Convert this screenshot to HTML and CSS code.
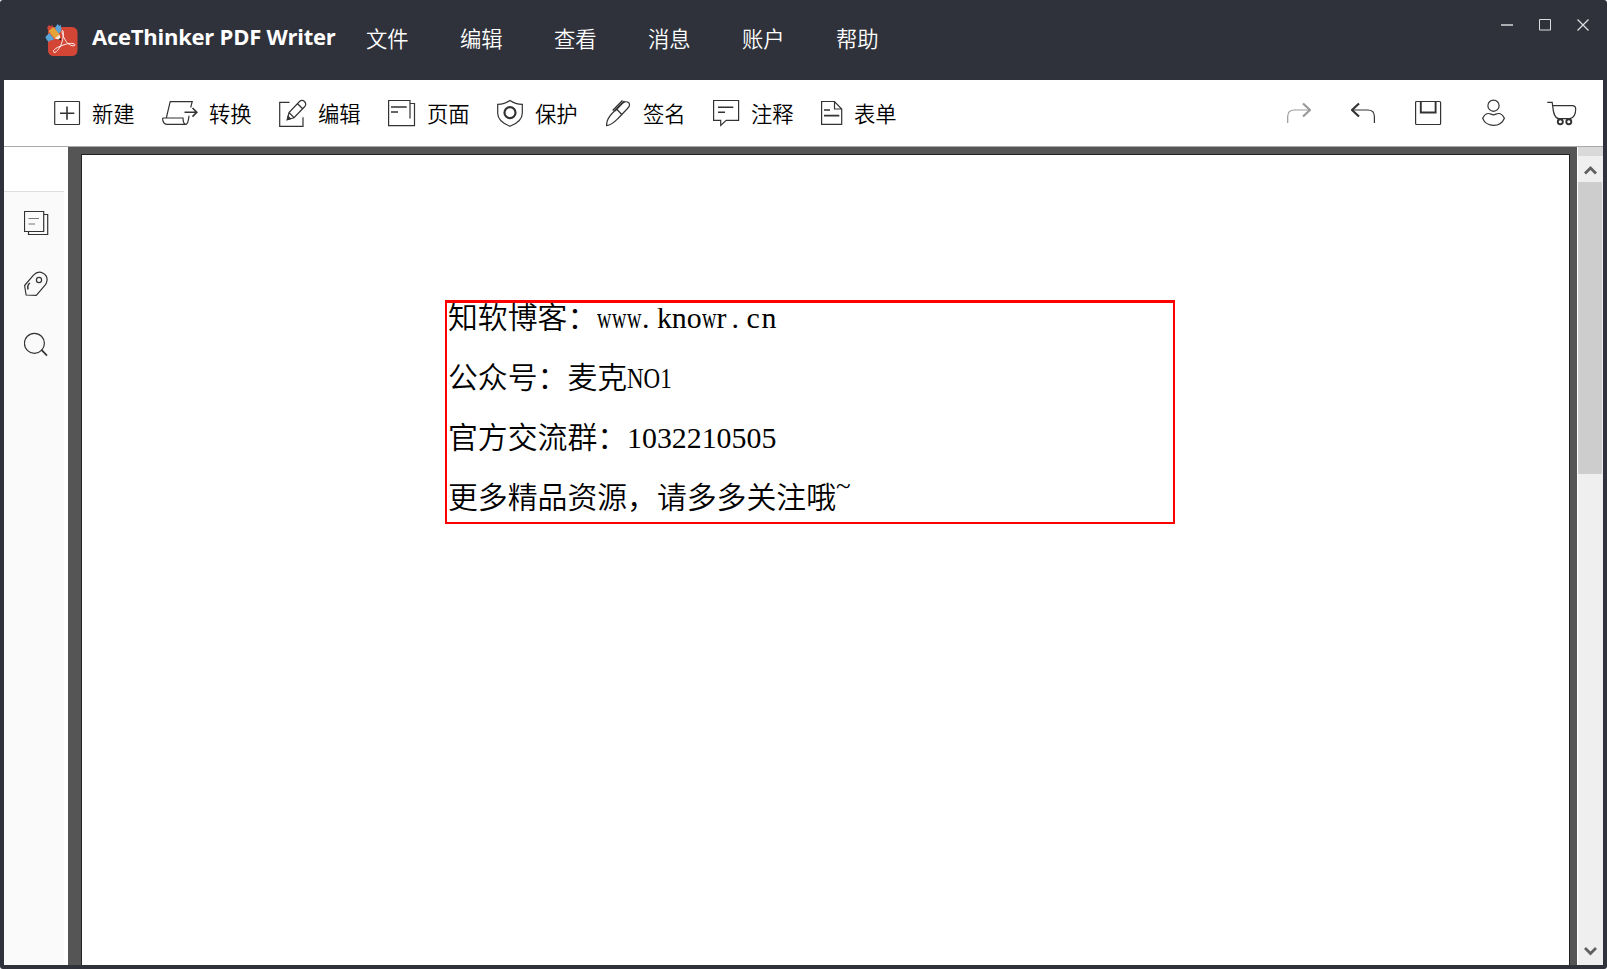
FILE: index.html
```html
<!DOCTYPE html>
<html lang="zh-CN">
<head>
<meta charset="utf-8">
<title>AceThinker PDF Writer</title>
<link rel="stylesheet" href="styles.css">
</head>
<body>
<div class="window">
  <header class="titlebar">
    <svg class="logo" width="34" height="34" viewBox="0 0 34 34">
      <rect x="3" y="4" width="29.5" height="29" rx="5.5" fill="#d34635"/>
      <path d="M.3 14l4-4 4 5 .5 2-4 .5-1 1.500-2-2z M10 5l2.500-4 2 2 1-1.500 1 4-1 3.500-2.500 2z" fill="#5aa5d8"/>
      <path d="M2 5l2-3 2 1.500 1-2 1.500 4-4 3z" fill="#d9473a"/>
      <path d="M3.500 8l5-4 6 7.500-5 4z" fill="#e5a338"/>
      <path d="M9.500 15.500l5-4 1.500 5.500z" fill="#f6e8d2"/>
      <path d="M13.300 16.500l2.200-1.700.8 2.700z" fill="#222"/>
      <path d="M17.500 7.500c-1.500 0 .5 7 4.500 12 3 3.500 7.500 4 8 2.500s-5-2.500-10-.5c-5 1.500-12 4.500-11.500 7s3.500 0 5.500-3c4-5 5.500-18 3.500-18z" fill="none" stroke="#fff" stroke-width=".9"/>
    </svg>
    <h1 class="title">AceThinker PDF Writer</h1>
    <nav class="menu">
      <span>文件</span><span>编辑</span><span>查看</span><span>消息</span><span>账户</span><span>帮助</span>
    </nav>
    <div class="controls">
      <svg width="12" height="12" viewBox="0 0 12 12"><path d="M0 6h12" stroke-width="2" stroke="#aaacb0"/></svg>
      <svg width="12" height="12" viewBox="0 0 12 12"><path d="M.5.5h11v10.500h-11z"/></svg>
      <svg width="12" height="12" viewBox="0 0 12 12"><path d="M.5.5l11 11M11.500.5l-11 11" stroke-width="1.300"/></svg>
    </div>
  </header>

  <div class="toolbar">
    <div class="tools">
      <div class="tool"><svg width="38" height="29"><rect x=".7" y="2.500" width="24.800" height="23" rx=".5"/><path d="M6 14.200h14.300M13 7.500v13.200" stroke-width="1.600"/></svg><span>新建</span></div>
      <div class="tool"><svg width="47" height="29"><path d="M28.700 8.500L30.200 2.700H8.200L4.300 19M.6 19H21c0 4 1 6.300 3 6.300H5C2 25.300.6 22.500.6 19M24 25.300c2.200-.3 2.500-4 3-8.500"/><path d="M22.500 13.300h12M30.500 9l4.300 4.300-4.300 4.300" stroke-width="1.600"/></svg><span>转换</span></div>
      <div class="tool"><svg width="39" height="29"><path d="M10.500 3.300H.7v24H24v-9"/><path d="M8.300 20.700l1.700-7.200L20.500 2.500q2.500-2.200 5 0 2.300 2.500.3 5L15 18.700zM10 13.500l5 5.200M18.500 4.700l5.200 5.100"/><path d="M8.300 20.700l.8-3.200 2.300 2.200z" fill="#333"/></svg><span>编辑</span></div>
      <div class="tool"><svg width="39" height="29"><path d="M22 19.500V1.500H.6v25.200h25.900V4.500H22"/><path d="M3 8h15.700M3 13h7" stroke-width="1.600"/></svg><span>页面</span></div>
      <div class="tool shield"><svg width="38" height="29"><path d="M13 1.500C9.500 4 5 5.300.7 5.300v9c0 6.500 5.800 10.500 12.300 13 6.500-2.500 12.300-6.500 12.300-13v-9C21 5.300 16.500 4 13 1.500z"/><circle cx="13" cy="13.700" r="5.500" stroke-width="2.200"/></svg><span>保护</span></div>
      <div class="tool"><svg width="37" height="29"><path d="M.6 26.600C.3 21.500 3 17.500 6.500 14L16 4.500c2.500-2.200 5.500-2 7-.5 1.300 2 .5 3.500-1.500 5.500L12.500 19C9 22.500 6 26 .6 26.600zM11 10.500l5.300 5.500"/><path d="M6.700 11.500L16.500 1.500M9 12L18.500 2" stroke-width="1.500"/></svg><span>签名</span></div>
      <div class="tool"><svg width="38" height="29"><path d="M.6 1.500h25v19.900H13.200l-5.500 5V21.400H.6z"/><path d="M5 8.300h15.300M5 13.300h7" stroke-width="1.600"/></svg><span>注释</span></div>
      <div class="tool"><svg width="33" height="29"><path d="M.6 2.500h12.900l7.200 7.500v15.400H.6zM13.500 2.500V10h7.200"/><path d="M3 11h6M3 16.700h15.300" stroke-width="1.700"/></svg><span>表单</span></div>
    </div>
    <div class="actions">
      <svg class="disabled" width="24" height="29"><path d="M.7 24v-6.500Q.7 11 7.500 11H23"/><path d="M16 4.500l7 6.500-7 6.500" stroke-width="2.200"/></svg>
      <svg width="24" height="29"><path d="M23.400 24v-6.500q0-6.500-6.800-6.500H1"/><path d="M8 4.500L1 11l7 6.500" stroke-width="2.200"/></svg>
      <svg width="27" height="29"><rect x=".6" y="2.500" width="25" height="23" rx="1"/><path d="M5.800 2.500v11h14.800v-11" stroke-width="1.900"/></svg>
      <svg width="25" height="29"><circle cx="11.500" cy="6.700" r="5.600"/><path d="M.7 19.200C2 16.500 4 14.500 6.500 14.500c2 0 3 1.300 5 1.300s3-1.300 5-1.300c2.500 0 4.500 2 5.900 4.700-2 4.800-6.500 7.200-10.900 7.200S2.300 24 .7 19.200z"/></svg>
      <svg width="30" height="29"><path d="M.3 3.300h4.900C6 8 5.800 19.500 12 19.700h11c4-1 5.700-4.700 5.700-9.700 0-2.500-1-3.300-3.500-3.300H5.700"/><circle cx="13.300" cy="22.700" r="2.500" stroke-width="1.900"/><circle cx="21.800" cy="22.700" r="2.500" stroke-width="1.900"/></svg>
    </div>
  </div>

  <main class="workspace">
    <aside class="sidebar">
      <div class="side-head"></div>
      <div class="side-icons">
        <svg width="26" height="26"><path d="M.5 1.500h19.200v20H.5zM19.700 4.500h4v20H4.500v-3"/><path d="M4.500 8.500H15M4.500 14h6.500" stroke="#777"/></svg>
        <svg width="26" height="26"><path d="M.6 14.500L9.500 4.200c6-6.500 15-1 13.300 6.300-.2 1.500-.8 2.500-1.500 3.300l-9 10.500-10.200-.3z"/><circle cx="15" cy="9" r="2.600"/><path d="M6 12q-3 2-2 6.500" stroke-width="1.500"/></svg>
        <svg width="26" height="26"><circle cx="10.400" cy="11.300" r="10"/><path d="M17.300 17.700l5.700 6" stroke-width="1.700"/></svg>
      </div>
    </aside>
    <div class="viewer">
      <article class="page">
        <div class="frame">
          <p>知软博客：<span class="latin url"><span class="w">w</span><span class="w">w</span><span class="w">w</span><span>.</span><span>k</span><span>n</span><span>o</span><span class="w">w</span><span>r</span><span>.</span><span>c</span><span>n</span></span></p>
          <p>公众号：麦克<span class="latin narrow">NO1</span></p>
          <p>官方交流群：<span class="latin">1032210505</span></p>
          <p>更多精品资源，请多多关注哦<span class="tilde">~</span></p>
        </div>
      </article>
    </div>
    <div class="scrollbar">
      <div class="scroll-cap"></div>
      <svg width="26" height="26"><path d="M8 17.500l5.500-5.500 5.500 5.500"/></svg>
      <div class="thumb"></div>
      <svg class="down" width="26" height="26"><path d="M8 9l5.500 5.500L19 9"/></svg>
    </div>
  </main>
</div>
</body>
</html>
```
FILE: styles.css
```css
* { box-sizing: border-box; }
body { margin: 0; background: #fff; font-family: "Noto Sans CJK SC", sans-serif; }
svg { display: block; flex: none; }

.window {
  display: flex;
  flex-direction: column;
  width: 1607px;
  height: 969px;
  padding: 0 4px 4px;
  background: #2f323b;
  border-radius: 3px;
  overflow: hidden;
}

/* Title bar */
.titlebar { display: flex; height: 80px; padding-left: 41px; color: #fff; }
.logo { margin-top: 23px; }
.title {
  width: 244px;
  margin: 21px 30px 0 13px;
  font: bold 22px/30px "Open Sans", sans-serif;
  letter-spacing: -.24px;
  white-space: nowrap;
}
.menu { display: flex; gap: 52px; margin-top: 22px; font-size: 21.33px; font-weight: 350; line-height: 32px; }
.menu span, .tool span { width: 42px; white-space: nowrap; }
.controls { display: flex; gap: 26px; margin: 19px 14px 0 auto; }
.controls svg { fill: none; stroke: #dcdde0; }

/* Toolbar */
.toolbar {
  display: flex;
  justify-content: space-between;
  height: 67px;
  padding: 19px 26px 0 50px;
  background: #fff;
  border-bottom: 1px solid #aaa;
}
.toolbar svg, .side-icons svg { fill: none; stroke: #333; stroke-width: 1.2; }
.tools { display: flex; gap: 28px; color: #000; }
.tool { display: flex; font-size: 21.33px; font-weight: 350; line-height: 27px; }
.shield { margin-right: 1px; }
.actions { display: flex; gap: 40px; }
.toolbar .disabled { stroke: #999; }

/* Workspace */
.workspace { display: flex; flex: 1; min-height: 0; background: #555; }
.sidebar { display: flex; flex-direction: column; width: 64px; padding-right: 4px; background: #fff; }
.side-head { height: 45px; border-bottom: 1px solid #ddd; }
.side-icons { display: flex; flex: 1; flex-direction: column; gap: 35px; padding: 18px 0 0 20px; background: #fafafa; }
.viewer { display: flex; flex: 1; padding: 7px 7px 0 13px; }
.page { flex: 1; padding: 145px 0 0 363px; background: #fff; border: solid #222; border-width: 1px 1px 0; }
.frame { width: 730px; height: 224px; padding-left: 1px; border: 2px solid #f00; border-top-width: 3px; }
.frame p { height: 60px; margin: 0; font-size: 29.85px; font-weight: 350; line-height: 60px; color: #000; white-space: nowrap; }
.frame p:first-child { margin-top: -18px; }
.latin { font-family: "Liberation Serif", serif; }
.narrow { display: inline-block; transform: scaleX(.77); transform-origin: 0 50%; }
.url span { display: inline-block; width: .5em; }
.url .w { transform: scaleX(.67); transform-origin: 0 50%; }
.tilde { display: inline-block; font: 27px/30px "Liberation Serif", serif; transform: translateY(-13px); }

/* Scrollbar */
.scrollbar { display: flex; flex-direction: column; width: 26px; background: #efefef; border-left: 1px solid #fff; }
.scrollbar svg { margin-left: -1px; fill: none; stroke: #606060; stroke-width: 2.8; }
.scroll-cap { height: 9px; background: #d9d9d9; }
.thumb { width: 24px; height: 292px; background: #cdcdcd; }
.scrollbar .down { margin-top: auto; }
```
